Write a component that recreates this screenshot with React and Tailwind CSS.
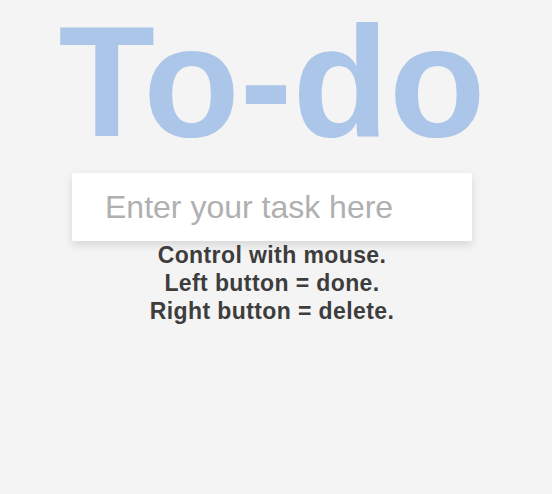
export default function App() {
  return (
    <div className="min-h-[494px] bg-[#f4f4f4] font-['Liberation_Sans',Arial,sans-serif]">
      <div className="w-[544px] flex flex-col items-center text-center">
        <h1 className="m-0 text-[158px] leading-[162px] font-bold text-[#acc6e9]">To-do</h1>
        <input
          type="text"
          placeholder="Enter your task here"
          className="mt-[11px] w-[400px] h-[68px] bg-white rounded-[2px] pl-[33px] pr-4 text-[32px] text-[#333] placeholder:text-[#b0b0b0] outline-none shadow-[0_4px_10px_rgba(0,0,0,0.12)]"
        />
        <p className="m-0 text-[23px] tracking-[0.4px] leading-7 font-bold text-[#3d3d3d]">
          Control with mouse.
          <br />
          Left button = done.
          <br />
          Right button = delete.
        </p>
      </div>
    </div>
  );
}
